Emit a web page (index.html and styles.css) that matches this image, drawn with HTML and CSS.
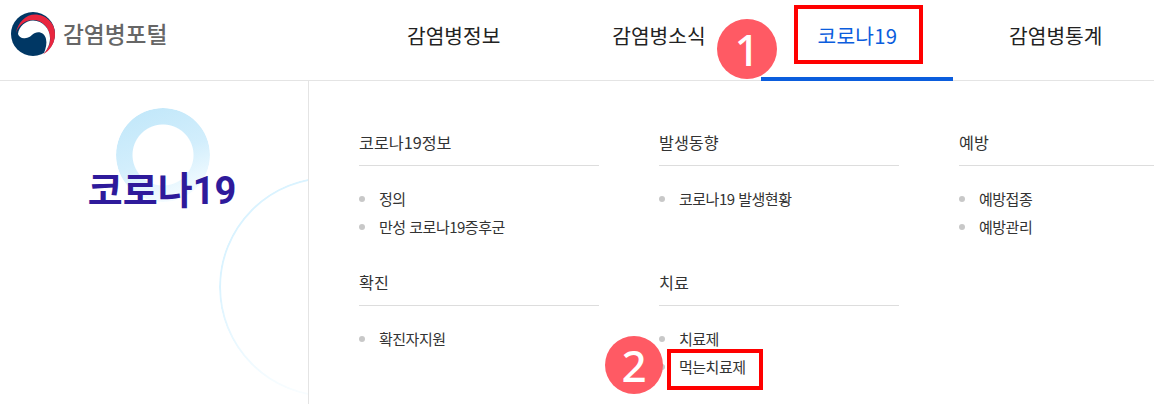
FILE: index.html
```html
<!DOCTYPE html>
<html lang="ko">
<head>
<meta charset="utf-8">
<title>감염병포털</title>
<link rel="stylesheet" href="styles.css">
</head>
<body>
<div class="page">
  <header class="top">
    <a class="logo">
      <svg class="mark" width="46" height="44" viewBox="0 0 46 44">
        <circle cx="23" cy="22" r="22" fill="#003764"/>
        <path d="M6 21C8 10 16 2.500 25 2.500C36 2.500 45 11 45 22C45 31 40 38.500 33 42.500C38 37 41 31 40 25C39 14 31 8 23 8C16 8 9 12 6 21Z" fill="#e8263f"/>
        <path d="M8 22C9 14 16 8.500 23 8.500C33 8.500 40 17 40 26C40 31 38 37 34 41C36 36 37 31 36 27C35 22 30 19 25 21C22 22 20 26 16 26C12 27 9 25 8 22Z" fill="#fff"/>
      </svg>
      <span class="logo-text">감염병포털</span>
    </a>
    <nav class="gnb">
      <a class="gnb-item">감염병정보</a>
      <a class="gnb-item">감염병소식</a>
      <a class="gnb-item active">코로나19</a>
      <a class="gnb-item">감염병통계</a>
    </nav>
  </header>
  <main class="panel">
    <aside class="side">
      <span class="ring-small"></span>
      <span class="ring-large"></span>
      <h2 class="side-title">코로나19</h2>
    </aside>
    <div class="menu">
      <section class="group">
        <h3 class="group-title">코로나19정보</h3>
        <ul class="links"><li>정의</li><li>만성 코로나19증후군</li></ul>
      </section>
      <section class="group">
        <h3 class="group-title">발생동향</h3>
        <ul class="links"><li>코로나19 발생현황</li></ul>
      </section>
      <section class="group">
        <h3 class="group-title">예방</h3>
        <ul class="links"><li>예방접종</li><li>예방관리</li></ul>
      </section>
      <section class="group">
        <h3 class="group-title">확진</h3>
        <ul class="links"><li>확진자지원</li></ul>
      </section>
      <section class="group">
        <h3 class="group-title">치료</h3>
        <ul class="links"><li>치료제</li><li>먹는치료제</li></ul>
      </section>
    </div>
  </main>
  <span class="mark-box box-one"></span>
  <span class="mark-box box-two"></span>
  <span class="badge badge-one">1</span>
  <span class="badge badge-two">2</span>
</div>
</body>
</html>
```
FILE: styles.css
```css
* { box-sizing: border-box; }
html, body { margin: 0; padding: 0; background: #fff; }
body { font-family: "Noto Sans CJK KR", "Noto Sans", sans-serif; color: #333; }
.page { position: relative; width: 1154px; height: 404px; overflow: hidden; }
.top { display: flex; height: 81px; border-bottom: 1px solid #e4e4e4; }
.logo { display: flex; flex: none; align-items: center; width: 351px; padding: 0 0 12px 10px; gap: 7px; }
.mark { display: block; flex: none; }
.logo-text { font-size: 22.7px; font-weight: 500; color: #666; line-height: 1; }
.gnb { display: flex; flex: none; white-space: nowrap; }
.gnb-item { display: flex; align-items: center; height: 81px; padding: 0 56px 7px; font-size: 20.3px; font-weight: 400; color: #222; border-bottom: 4px solid transparent; margin-bottom: -1px; }
.gnb-item.active { color: #0b5ddd; border-bottom-color: #0b5ddd; letter-spacing: 0.2px; margin-left: -1px; padding: 0 56px 7px 57px; }
.panel { display: flex; height: 323px; }
.side { position: relative; width: 309px; flex: none; border-right: 1px solid #e4e4e4; overflow: hidden; }
.side-title { position: relative; margin: 0; padding: 82px 0 0 16px; text-align: center; font-family: Roboto, "Noto Sans CJK KR", sans-serif; font-size: 38px; font-weight: 700; line-height: 56px; color: #2e1a9b; }
.ring-small { position: absolute; left: 116px; top: 27px; width: 94px; height: 94px; border-radius: 50%; background: linear-gradient(160deg, #c3e8fa 10%, #d2eefc 50%, #f2fbff 85%, #fff); -webkit-mask: radial-gradient(circle, transparent 30px, #000 31px); mask: radial-gradient(circle, transparent 30px, #000 31px); }
.ring-large { position: absolute; left: 219px; top: 96px; width: 220px; height: 220px; border-radius: 50%; border: 2px solid #daf3ff; -webkit-mask: linear-gradient(to bottom, #000 50%, rgba(0,0,0,.15) 100%); mask: linear-gradient(to bottom, #000 50%, rgba(0,0,0,.15) 100%); }
.menu { display: grid; grid-template-columns: repeat(3, 300px); grid-auto-rows: 140px; padding: 42px 0 0 50px; flex: none; width: 845px; }
.group { width: 240px; }
.group-title { margin: 0; height: 43px; border-bottom: 1px solid #ddd; font-size: 16.2px; font-weight: 400; line-height: 38px; color: #333; width: 240px; }
.links { list-style: none; margin: 19px 0 0; padding: 0; }
.links li { position: relative; height: 28px; padding-left: 20px; font-size: 15px; line-height: 28px; color: #333; letter-spacing: -0.5px; }
.links li::before { content: ""; position: absolute; left: 0; top: 11px; width: 6px; height: 6px; border-radius: 50%; background: #c8c8c8; }
.mark-box { position: absolute; border: 4px solid #f00; }
.box-one { left: 794px; top: 5px; width: 129px; height: 59px; }
.box-two { left: 667px; top: 349px; width: 96px; height: 41px; }
.badge { position: absolute; display: flex; align-items: center; justify-content: center; border-radius: 50%; background: #ff5a64; color: #fff; font-family: "Noto Sans", sans-serif; font-weight: 500; line-height: 1; }
.badge-one { left: 717px; top: 19px; width: 60px; height: 60px; font-size: 44px; }
.badge-two { left: 605px; top: 336px; width: 58px; height: 58px; font-size: 44px; }
```
